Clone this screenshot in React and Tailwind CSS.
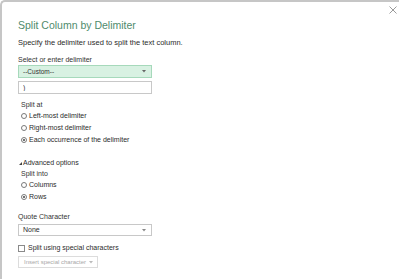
import { useState } from 'react'

const font = { fontFamily: '"Liberation Sans", Arial, sans-serif' }

function Radio({ checked, label, onClick }) {
  return (
    <div onClick={onClick} className="h-[12px] flex items-center pl-[3px] cursor-default">
      <span className="w-[6px] h-[6px] rounded-full border border-[#7a7a7a] bg-white flex items-center justify-center">
        {checked && <span className="w-[2px] h-[2px] rounded-full bg-[#444]" />}
      </span>
      <span className="ml-[2px] text-[7px] leading-[12px] text-[#2b2b2b]">{label}</span>
    </div>
  )
}

function Arrow({ color = '#555' }) {
  return (
    <svg width="4" height="3" viewBox="0 0 4 3" className="shrink-0">
      <path d="M0 0 L4 0 L2 2.5 Z" fill={color} />
    </svg>
  )
}

export default function App() {
  const [splitAt, setSplitAt] = useState('each')
  const [into, setInto] = useState('rows')
  const [special, setSpecial] = useState(false)
  const [delim, setDelim] = useState(')')

  return (
    <div className="w-[399px] h-[279px] bg-white overflow-hidden" style={font}>
      <div className="relative h-full border-t-2 border-l-2 border-[#c6c6c6] rounded-tl-[5px] pl-[16px]">
        <svg width="8" height="8" viewBox="0 0 8 8" className="absolute right-[2px] top-[4px]">
          <path d="M0.5 0.5 L7.5 7.5 M7.5 0.5 L0.5 7.5" stroke="#9a9a9a" strokeWidth="1" />
        </svg>

        <div className="mt-[16px] h-[14px] leading-[14px] text-[10.5px] text-[#4f8b6c]">Split Column by Delimiter</div>
        <div className="mt-[6px] h-[10px] leading-[10px] text-[7.5px] text-[#2b2b2b]">Specify the delimiter used to split the text column.</div>

        <div className="mt-[8px] h-[8px] leading-[8px] text-[7px] text-[#333]">Select or enter delimiter</div>
        <div className="mt-[1px] w-[134px] h-[13px] border border-[#a6d9bb] bg-[#d8f1e2] flex items-center justify-between pl-[4px] pr-[5px]">
          <span className="text-[6.5px] text-[#333]">--Custom--</span>
          <Arrow color="#666" />
        </div>
        <input
          value={delim}
          onChange={e => setDelim(e.target.value)}
          className="block mt-[3px] w-[134px] h-[13px] border border-[#c8c8c8] bg-white px-[4px] text-[7px] text-[#333] outline-none"
        />

        <div className="mt-[6px] h-[10px] leading-[10px] pl-[3px] text-[7px] text-[#333]">Split at</div>
        <Radio checked={splitAt === 'left'} onClick={() => setSplitAt('left')} label="Left-most delimiter" />
        <Radio checked={splitAt === 'right'} onClick={() => setSplitAt('right')} label="Right-most delimiter" />
        <Radio checked={splitAt === 'each'} onClick={() => setSplitAt('each')} label="Each occurrence of the delimiter" />

        <div className="mt-[12px] h-[10px] flex items-center pl-[1px]">
          <svg width="3" height="3" viewBox="0 0 3 3">
            <path d="M3 0 L3 3 L0 3 Z" fill="#444" />
          </svg>
          <span className="ml-[1px] text-[7px] leading-[10px] text-[#2b2b2b]">Advanced options</span>
        </div>
        <div className="mt-[1px] h-[10px] leading-[10px] pl-[3px] text-[7px] text-[#333]">Split into</div>
        <Radio checked={into === 'columns'} onClick={() => setInto('columns')} label="Columns" />
        <Radio checked={into === 'rows'} onClick={() => setInto('rows')} label="Rows" />

        <div className="mt-[9px] h-[10px] leading-[10px] text-[7px] text-[#333]">Quote Character</div>
        <div className="mt-[2px] w-[134px] h-[12px] border border-[#c8c8c8] bg-white flex items-center justify-between pl-[4px] pr-[5px]">
          <span className="text-[7px] text-[#2b2b2b]">None</span>
          <Arrow color="#888" />
        </div>

        <div onClick={() => setSpecial(!special)} className="mt-[7px] h-[10px] flex items-center cursor-default">
          <span className="w-[7px] h-[7px] border border-[#8a8a8a] bg-white" />
          <span className="ml-[3px] text-[7px] leading-[10px] text-[#2b2b2b]">Split using special characters</span>
        </div>

        <div className="mt-[3px] w-[80px] h-[12px] border border-[#dcdcdc] bg-white flex items-center pl-[5px] gap-[3px]">
          <span className="text-[6px] text-[#a8a8a8]">Insert special character</span>
          <Arrow color="#bbb" />
        </div>
      </div>
    </div>
  )
}
